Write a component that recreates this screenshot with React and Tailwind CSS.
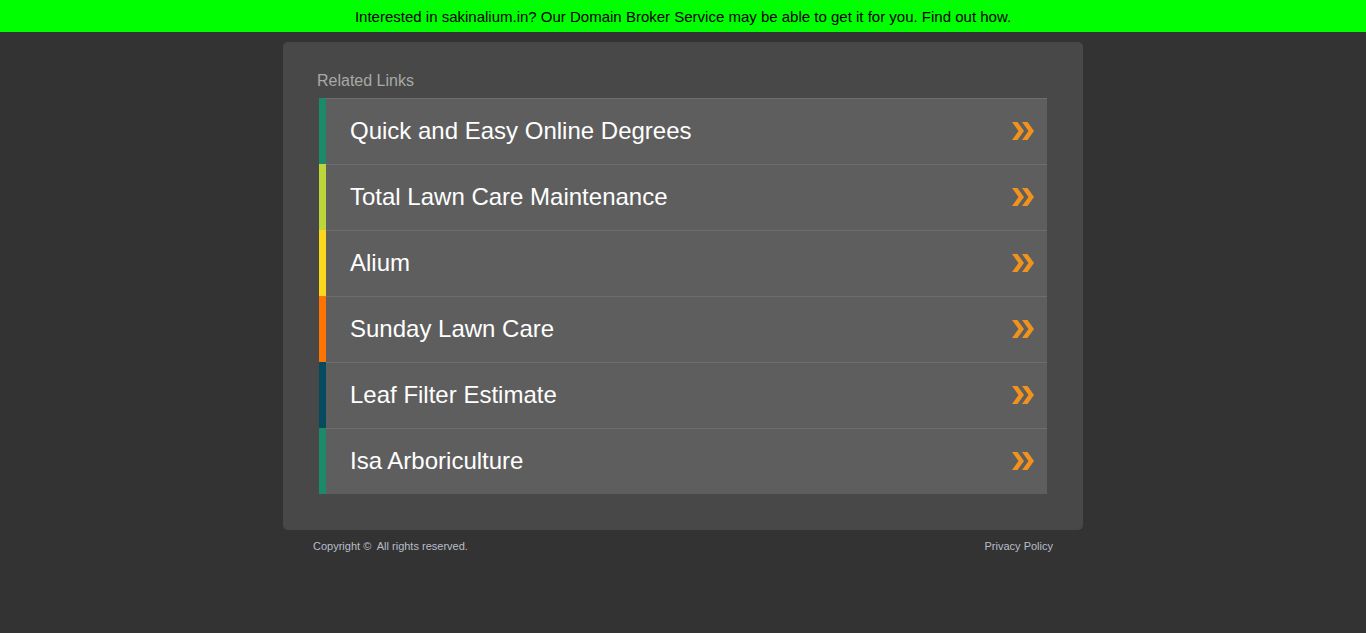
import React from "react";

const links = [
  { t: "Quick and Easy Online Degrees", c: "bg-[#1b8a6b]" },
  { t: "Total Lawn Care Maintenance", c: "bg-[#bcd63a]" },
  { t: "Alium", c: "bg-[#fcd81c]" },
  { t: "Sunday Lawn Care", c: "bg-[#ff7300]" },
  { t: "Leaf Filter Estimate", c: "bg-[#064a5f]" },
  { t: "Isa Arboriculture", c: "bg-[#1b8a6b]" },
];

function Chevrons() {
  return (
    <svg width="24" height="20" viewBox="0 0 24 20" className="mr-[12px]">
      <path d="M1 1 H6.5 L13 10 L6.5 19 H1 L7.5 10 Z" fill="#f0931e" />
      <path d="M11 1 H16.5 L23 10 L16.5 19 H11 L17.5 10 Z" fill="#f0931e" />
    </svg>
  );
}

export default function App() {
  return (
    <div className="min-h-[633px] bg-[#333333] font-['Liberation_Sans',Arial,sans-serif]">
      <div className="h-[32px] bg-[#00ff00] flex items-center justify-center text-[15px] text-black pt-[2px]">
        Interested in sakinalium.in? Our Domain Broker Service may be able to get it for you. Find out how.
      </div>
      <div className="w-[800px] mx-auto mt-[10px] bg-[#484848] rounded-[5px] px-[36px] pt-[29px] pb-[36px]">
        <div className="text-[16px] leading-[20px] text-[#a9a9a9] -ml-[2px] mb-[7px]">Related Links</div>
        <div>
          {links.map((l, i) => (
            <div key={i} className="flex h-[66px] bg-[#5e5e5e] border-t border-[#6e6e6e]">
              <div className={`w-[7px] -mt-px ${l.c}`} />
              <div className="flex-1 flex items-center justify-between pl-[24px] pb-[2px]">
                <span className="text-[24px] text-white">{l.t}</span>
                <Chevrons />
              </div>
            </div>
          ))}
        </div>
      </div>
      <div className="w-[740px] mx-auto flex justify-between text-[11px] text-[#b8bec8] mt-[8px]">
        <span>Copyright ©&nbsp; All rights reserved.</span>
        <span>Privacy Policy</span>
      </div>
    </div>
  );
}
